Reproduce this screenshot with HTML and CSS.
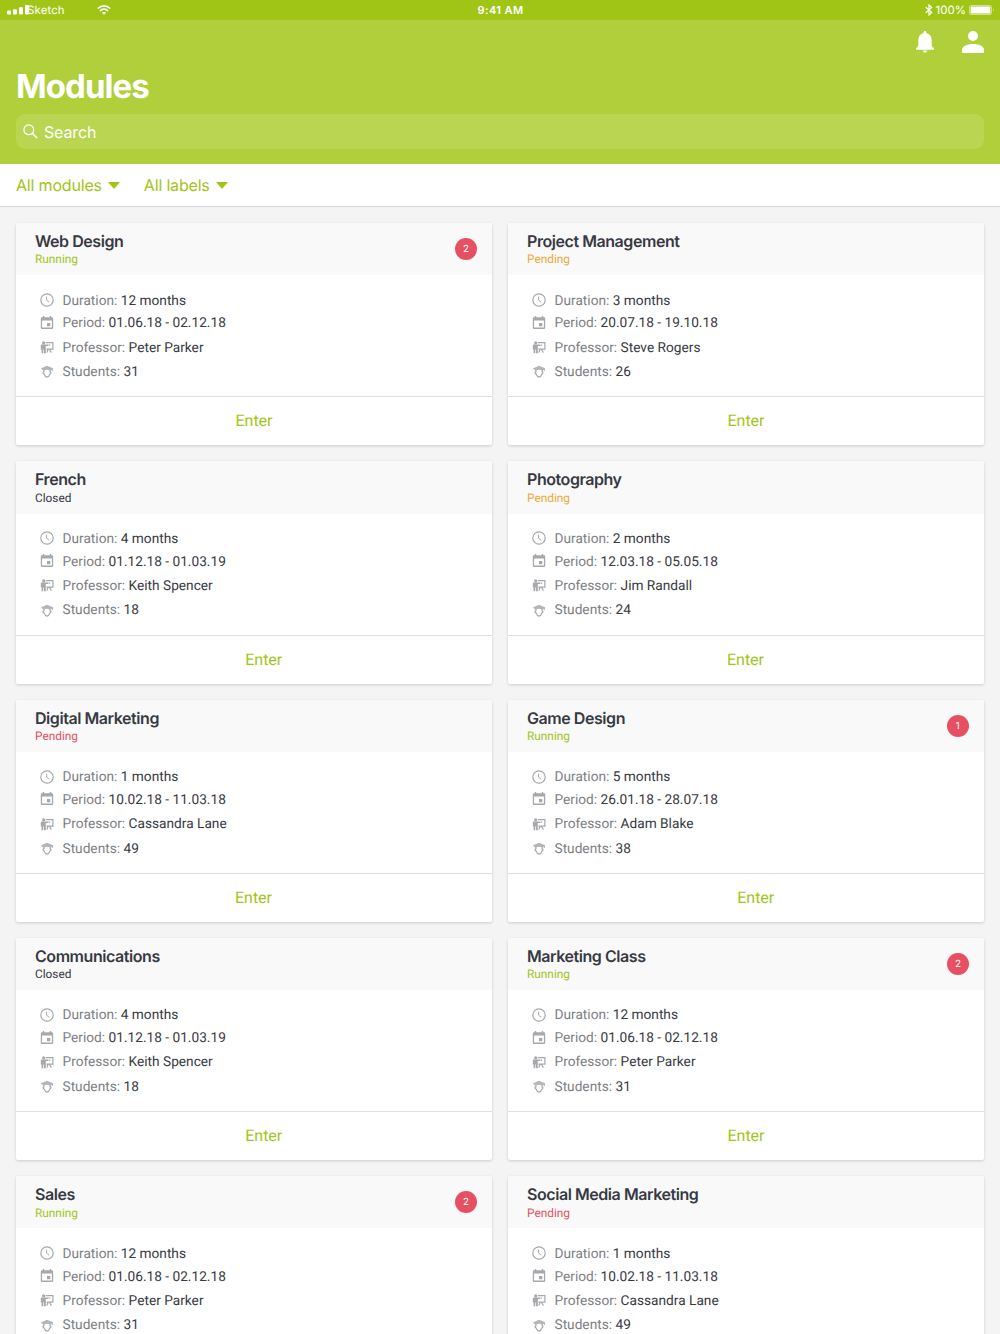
FILE: index.html
```html
<!DOCTYPE html>
<html lang="en">
<head>
<meta charset="utf-8">
<title>Modules</title>
<link rel="stylesheet" href="styles.css">
</head>
<body>
<svg class="sprite" aria-hidden="true">
  <symbol id="clock" viewBox="0 0 14 14"><circle cx="7" cy="7" r="6.2" fill="none" stroke="currentColor" stroke-width="1.2"/><path d="M6.6 3.6V7.2L9.2 9.2" fill="none" stroke="currentColor"/></symbol>
  <symbol id="calendar" viewBox="0 0 14 14"><path d="M2.8 0H4.2V1.3H9.8V0H11.2V1.3H12Q13.2 1.3 13.2 2.5V11.7Q13.2 12.9 12 12.9H2Q.8 12.9 .8 11.7V2.5Q.8 1.3 2 1.3H2.8ZM2.1 4.4V11.6H11.9V4.4ZM7 6.9H10.3V10.2H7Z" fill="currentColor" fill-rule="evenodd"/></symbol>
  <symbol id="teacher" viewBox="0 0 14 14"><circle cx="3.7" cy="2.9" r="1.6" fill="currentColor"/><path d="M1.3 4.4H8.2V5.9H5.8V13.2H4V9.5H3.3V13.2H1.6V9.5H.8V5Z" fill="currentColor"/><path d="M5.8 2.6H12.9V9.2H6.4M8 9.2L6.9 12.6M9.4 9.2L11.4 12.6M8.6 5.2H10.2" fill="none" stroke="currentColor" stroke-width="1.2"/></symbol>
  <symbol id="student" viewBox="0 0 14 14"><path d="M7 1.7L13.1 4.3L12.8 7H11.8V5.8L10.6 6.4Q7 5 3.4 6.4L.8 4.4Z" fill="currentColor" fill-opacity=".85"/><path d="M3.9 6V7.8Q2.6 8 3.3 9.4Q3.6 9.9 4.2 10.1Q5 12.9 7 13.1Q9 12.9 9.8 10.1Q10.4 9.9 10.7 9.4Q11.4 8 10.1 7.8V6" fill="none" stroke="currentColor" stroke-width="1.2"/></symbol>
</svg>

<header class="top">
  <div class="status">
    <div class="status-left">
      <svg class="signal" viewBox="0 0 24 10"><rect x="0" y="5.6" width="4" height="4" rx="1"/><rect x="6" y="4.3" width="4" height="5.3" rx="1"/><rect x="12" y="2.3" width="4" height="7.3" rx="1"/><rect x="18" y="0" width="4" height="9.6" rx="1"/></svg>
      <span class="carrier">Sketch</span>
      <svg class="wifi" viewBox="0 0 14 10"><path d="M.8 3.5Q7-1.8 13.2 3.5M3 5.9Q7 2.5 11 5.9" fill="none" stroke="#fff" stroke-width="1.6"/><path d="M4.8 7.6Q7 5.9 9.2 7.6L7 9.8Z" fill="#fff"/></svg>
    </div>
    <div class="status-time">9:41 AM</div>
    <div class="status-right">
      <svg class="bluetooth" viewBox="0 0 8 12"><path d="M.8 3.2L6.7 8.4L4 11V1L6.7 3.6L.8 8.8" fill="none" stroke="#fff" stroke-width="1.2"/></svg>
      <span>100%</span>
      <svg class="battery" viewBox="0 0 26 10"><rect x=".5" y=".5" width="22" height="9" rx="1.5" fill="none" stroke="#fff" stroke-opacity=".5"/><rect x="1.6" y="1.4" width="19.8" height="7.2" rx=".6" fill="#fff"/><path d="M24 3.5Q26 5 24 6.5Z" fill="#fff" fill-opacity=".5"/></svg>
    </div>
  </div>
  <div class="actions">
    <svg class="bell" viewBox="0 0 18 22"><path d="M7.6 2V1.4Q7.6.1 9 .1T10.4 1.4V2Q15.6 3.3 15.7 9V15L17.9 17.3V18.8H.1V17.3L2.3 15V9Q2.4 3.3 7.6 2ZM6.8 19.6H11.2Q10.9 21.8 9 21.8T6.8 19.6Z" fill="#fff"/></svg>
    <svg class="user" viewBox="0 0 22 22"><circle cx="11" cy="5" r="5" fill="#fff"/><path d="M0 22V18.8C0 15.1 5.8 13 11 13S22 15.1 22 18.8V22Z" fill="#fff"/></svg>
  </div>
  <h1>Modules</h1>
  <div class="search">
    <svg viewBox="0 0 15 15"><circle cx="5.8" cy="5.8" r="4.9" fill="none" stroke="#fff" stroke-width="1.2"/><path d="M9.3 9.3L14 14" stroke="#fff" stroke-width="1.5"/></svg>
    <span>Search</span>
  </div>
</header>

<nav class="filters">
  <span class="filter">All modules <i class="caret"></i></span>
  <span class="filter">All labels <i class="caret"></i></span>
</nav>

<main class="grid">
  <article class="card">
    <div class="card-head"><div><h2>Web Design</h2><p class="state running">Running</p></div><span class="badge">2</span></div>
    <ul class="facts">
      <li><svg><use href="#clock"/></svg><span>Duration: <b>12 months</b></span></li>
      <li><svg><use href="#calendar"/></svg><span>Period: <b>01.06.18 - 02.12.18</b></span></li>
      <li><svg><use href="#teacher"/></svg><span>Professor: <b>Peter Parker</b></span></li>
      <li><svg><use href="#student"/></svg><span>Students: <b>31</b></span></li>
    </ul>
    <div class="enter">Enter</div>
  </article>
  <article class="card">
    <div class="card-head"><div><h2>Project Management</h2><p class="state waiting">Pending</p></div></div>
    <ul class="facts">
      <li><svg><use href="#clock"/></svg><span>Duration: <b>3 months</b></span></li>
      <li><svg><use href="#calendar"/></svg><span>Period: <b>20.07.18 - 19.10.18</b></span></li>
      <li><svg><use href="#teacher"/></svg><span>Professor: <b>Steve Rogers</b></span></li>
      <li><svg><use href="#student"/></svg><span>Students: <b>26</b></span></li>
    </ul>
    <div class="enter">Enter</div>
  </article>
  <article class="card">
    <div class="card-head"><div><h2>French</h2><p class="state">Closed</p></div></div>
    <ul class="facts">
      <li><svg><use href="#clock"/></svg><span>Duration: <b>4 months</b></span></li>
      <li><svg><use href="#calendar"/></svg><span>Period: <b>01.12.18 - 01.03.19</b></span></li>
      <li><svg><use href="#teacher"/></svg><span>Professor: <b>Keith Spencer</b></span></li>
      <li><svg><use href="#student"/></svg><span>Students: <b>18</b></span></li>
    </ul>
    <div class="enter shifted">Enter</div>
  </article>
  <article class="card">
    <div class="card-head"><div><h2>Photography</h2><p class="state waiting">Pending</p></div></div>
    <ul class="facts">
      <li><svg><use href="#clock"/></svg><span>Duration: <b>2 months</b></span></li>
      <li><svg><use href="#calendar"/></svg><span>Period: <b>12.03.18 - 05.05.18</b></span></li>
      <li><svg><use href="#teacher"/></svg><span>Professor: <b>Jim Randall</b></span></li>
      <li><svg><use href="#student"/></svg><span>Students: <b>24</b></span></li>
    </ul>
    <div class="enter nudged">Enter</div>
  </article>
  <article class="card">
    <div class="card-head"><div><h2>Digital Marketing</h2><p class="state urgent">Pending</p></div></div>
    <ul class="facts">
      <li><svg><use href="#clock"/></svg><span>Duration: <b>1 months</b></span></li>
      <li><svg><use href="#calendar"/></svg><span>Period: <b>10.02.18 - 11.03.18</b></span></li>
      <li><svg><use href="#teacher"/></svg><span>Professor: <b>Cassandra Lane</b></span></li>
      <li><svg><use href="#student"/></svg><span>Students: <b>49</b></span></li>
    </ul>
    <div class="enter nudged">Enter</div>
  </article>
  <article class="card">
    <div class="card-head"><div><h2>Game Design</h2><p class="state running">Running</p></div><span class="badge">1</span></div>
    <ul class="facts">
      <li><svg><use href="#clock"/></svg><span>Duration: <b>5 months</b></span></li>
      <li><svg><use href="#calendar"/></svg><span>Period: <b>26.01.18 - 28.07.18</b></span></li>
      <li><svg><use href="#teacher"/></svg><span>Professor: <b>Adam Blake</b></span></li>
      <li><svg><use href="#student"/></svg><span>Students: <b>38</b></span></li>
    </ul>
    <div class="enter shifted">Enter</div>
  </article>
  <article class="card">
    <div class="card-head"><div><h2>Communications</h2><p class="state">Closed</p></div></div>
    <ul class="facts">
      <li><svg><use href="#clock"/></svg><span>Duration: <b>4 months</b></span></li>
      <li><svg><use href="#calendar"/></svg><span>Period: <b>01.12.18 - 01.03.19</b></span></li>
      <li><svg><use href="#teacher"/></svg><span>Professor: <b>Keith Spencer</b></span></li>
      <li><svg><use href="#student"/></svg><span>Students: <b>18</b></span></li>
    </ul>
    <div class="enter shifted">Enter</div>
  </article>
  <article class="card">
    <div class="card-head"><div><h2>Marketing Class</h2><p class="state running">Running</p></div><span class="badge">2</span></div>
    <ul class="facts">
      <li><svg><use href="#clock"/></svg><span>Duration: <b>12 months</b></span></li>
      <li><svg><use href="#calendar"/></svg><span>Period: <b>01.06.18 - 02.12.18</b></span></li>
      <li><svg><use href="#teacher"/></svg><span>Professor: <b>Peter Parker</b></span></li>
      <li><svg><use href="#student"/></svg><span>Students: <b>31</b></span></li>
    </ul>
    <div class="enter">Enter</div>
  </article>
  <article class="card">
    <div class="card-head"><div><h2>Sales</h2><p class="state running">Running</p></div><span class="badge">2</span></div>
    <ul class="facts">
      <li><svg><use href="#clock"/></svg><span>Duration: <b>12 months</b></span></li>
      <li><svg><use href="#calendar"/></svg><span>Period: <b>01.06.18 - 02.12.18</b></span></li>
      <li><svg><use href="#teacher"/></svg><span>Professor: <b>Peter Parker</b></span></li>
      <li><svg><use href="#student"/></svg><span>Students: <b>31</b></span></li>
    </ul>
  </article>
  <article class="card">
    <div class="card-head"><div><h2>Social Media Marketing</h2><p class="state urgent">Pending</p></div></div>
    <ul class="facts">
      <li><svg><use href="#clock"/></svg><span>Duration: <b>1 months</b></span></li>
      <li><svg><use href="#calendar"/></svg><span>Period: <b>10.02.18 - 11.03.18</b></span></li>
      <li><svg><use href="#teacher"/></svg><span>Professor: <b>Cassandra Lane</b></span></li>
      <li><svg><use href="#student"/></svg><span>Students: <b>49</b></span></li>
    </ul>
  </article>
</main>
</body>
</html>
```
FILE: styles.css
```css
* { box-sizing: border-box; }
body {
  margin: 0;
  height: 1334px;
  overflow: hidden;
  background: #f4f4f4;
  color: #373943;
  font-family: Roboto, sans-serif;
  text-rendering: geometricPrecision;
}
h1, h2, p, ul { margin: 0; padding: 0; }
svg { display: block; flex: none; }
.sprite { display: none; }

.top { height: 164px; background: #b0cf3b; color: #fff; font-family: Inter, sans-serif; }
.status {
  height: 20px;
  padding: 0 7px;
  display: grid;
  grid-template-columns: 1fr auto 1fr;
  align-items: center;
  background: #a1c517;
  font-size: 11.5px;
  line-height: 20px;
}
.status-left, .status-right { display: flex; align-items: center; }
.status-right { justify-content: flex-end; }
.signal { width: 24px; height: 10px; fill: #fff; }
.carrier { margin-left: -4px; width: 70px; letter-spacing: .1px; }
.wifi { width: 14px; height: 10px; }
.status-time { padding-left: 1px; font-weight: 600; font-size: 11px; letter-spacing: .4px; }
.bluetooth { width: 8px; height: 12px; margin-right: 3px; }
.battery { width: 26px; height: 10px; margin-left: 3px; margin-right: -2px; }

.actions { height: 44px; padding: 11px 16px 0; display: flex; justify-content: flex-end; gap: 28px; }
.bell { width: 18px; height: 22px; }
.user { width: 22px; height: 22px; }

h1 { height: 50px; padding-left: 16px; font-size: 33px; font-weight: 650; line-height: 44px; letter-spacing: -.95px; }
.search {
  height: 35px;
  margin: 0 16px;
  padding-left: 7px;
  display: flex;
  align-items: center;
  gap: 6px;
  border-radius: 9px;
  background: #b9d552;
  font-size: 16px;
  letter-spacing: -.15px;
}
.search svg { width: 15px; height: 15px; }

.filters {
  height: 43px;
  padding: 0 16px;
  display: flex;
  align-items: center;
  gap: 24px;
  background: #fff;
  border-bottom: 1px solid #d6d6d8;
  color: #a1c517;
  font-family: Inter, sans-serif;
  font-size: 16px;
  letter-spacing: -.18px;
}
.filter { display: flex; align-items: center; gap: 6px; }
.caret { border: 6px solid transparent; border-top: 7px solid #a1c517; border-bottom: 0; }

.grid {
  padding: 16px 16px 0;
  display: grid;
  grid-template-columns: 1fr 1fr;
  grid-auto-rows: 222.3px;
  gap: 16px;
}
.card {
  display: flex;
  flex-direction: column;
  overflow: hidden;
  border-radius: 2px;
  background: #fff;
  box-shadow: 0 1px 3px rgba(0, 0, 0, .17);
}
.card-head {
  height: 52.3px;
  padding: 8px 15px 0 19px;
  display: flex;
  justify-content: space-between;
  background: #f9f9f9;
}
h2 { font: 600 16px/20px Inter, sans-serif; letter-spacing: -.44px; }
.state { margin-top: .4px; font-size: 11.85px; line-height: 16px; }
.running { color: #a1c517; }
.waiting { color: #eaa93a; }
.urgent { color: #e65062; }
.badge {
  width: 22px;
  height: 22px;
  margin-top: 7px;
  border-radius: 50%;
  background: #e65062;
  color: #fff;
  font-size: 10px;
  line-height: 23.5px;
  text-align: center;
}
.facts {
  height: 121px;
  padding: 13.2px 0 0 24px;
  display: grid;
  grid-template-rows: 23px 22.5px 26px 23px;
  align-content: start;
  list-style: none;
  color: #7d7e83;
  font-size: 13.69px;
}
.facts li { display: flex; align-items: center; gap: 8.5px; }
.facts span { padding-top: 1.2px; }
.facts svg { width: 14px; height: 14px; color: #a7a8ac; }
.facts b { font-weight: 400; color: #373943; }
.enter {
  height: 49px;
  border-top: 1px solid #dfdfe1;
  color: #a1c517;
  font-size: 16px;
  line-height: 48px;
  text-align: center;
}
.shifted { padding-left: 19.5px; }
.nudged { padding-right: 1px; }
```
